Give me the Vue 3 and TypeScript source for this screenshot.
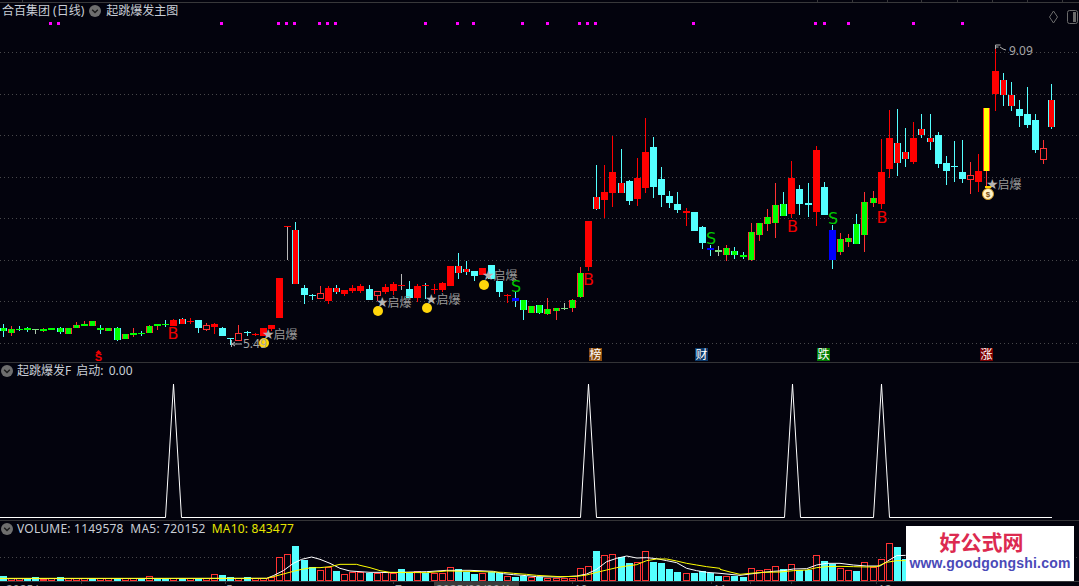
<script setup lang="ts">
type Kind = 'r' | 'x' | 'h' | 'c' | 'g' | 'k' | 'b' | 'y' | 'd' | 't' | 'p'
type Row = [Kind, number, number, number, number]

const rows: Row[] = [
  ['k',328,331,324,337],['g',329,333,326,336],['k',329,330,326,331],['k',328,330,327,332],['d',329,330,329,334],
  ['g',329,331,328,332],['g',328,330,328,330],['k',328,332,327,334],['g',328,334,328,334],['g',325,328,322,328],
  ['g',324,326,321,326],['g',321,326,321,326],['k',328,330,325,334],['g',328,331,328,331],['k',328,340,327,341],
  ['g',334,339,334,339],['g',333,335,328,337],['k',333,334,331,336],['g',326,333,325,333],['g',324,326,324,330],
  ['k',324,325,320,327],['r',320,326,319,326],['x',319,324,318,324],['r',321,322,318,324],['c',320,328,320,333],
  ['h',325,330,323,331],['r',324,327,323,334],['c',328,336,327,336],['c',338,339,338,345],['h',333,341,325,341],
  ['c',332,333,331,336],['r',334,335,333,336],['r',328,336,328,336],['r',325,329,325,331],['r',278,318,278,318],
  ['p',226,227,226,260],['x',230,284,222,284],['c',288,295,285,304],['c',295,296,294,300],['h',293,299,286,299],
  ['r',288,301,286,304],['x',288,292,285,294],['r',290,294,290,296],['r',288,291,285,293],['r',286,291,284,293],
  ['c',289,300,285,300],['h',291,296,291,301],['r',287,292,284,294],['r',284,291,282,295],['p',285,286,274,290],
  ['c',289,298,281,298],['r',286,298,284,302],['t',285,286,283,299],['r',289,290,284,294],['r',283,290,282,292],
  ['r',266,286,266,286],['x',266,273,253,279],['x',269,272,261,275],['c',271,276,271,281],['r',268,275,268,275],
  ['c',265,279,265,279],['c',281,292,281,297],['r',295,296,294,303],['b',298,301,292,307],['k',300,310,300,320],
  ['g',306,313,306,313],['k',305,313,305,314],['g',309,314,298,315],['g',308,311,308,320],['d',308,309,303,310],
  ['g',300,308,299,312],['g',273,297,267,298],['r',221,267,221,271],['x',197,209,165,210],['r',192,200,165,218],
  ['r',172,193,136,207],['x',183,193,149,193],['c',181,201,180,205],['r',178,199,158,206],['r',152,188,118,193],
  ['c',147,187,137,198],['c',179,195,167,207],['c',196,203,191,208],['c',204,210,192,213],['r',211,213,208,226],
  ['c',212,231,212,231],['c',227,243,226,249],['b',248,250,245,256],['d',250,252,246,256],['g',248,255,245,261],
  ['k',251,255,247,259],['k',255,257,252,259],['g',232,260,223,261],['g',223,235,223,241],['g',217,224,209,231],
  ['g',205,223,183,238],['k',204,216,192,216],['r',178,214,161,218],['c',189,204,185,215],['c',203,205,183,217],
  ['r',150,212,146,226],['c',187,215,182,215],['b',230,260,225,269],['g',239,252,233,255],['g',238,242,234,247],
  ['k',224,244,214,244],['g',202,235,192,252],['g',198,203,191,207],['r',172,204,139,209],['r',138,169,110,178],
  ['x',143,163,109,176],['x',152,159,128,167],['r',138,162,122,164],['x',129,135,114,138],['x',138,142,114,150],
  ['c',135,164,132,168],['c',163,171,156,185],['c',166,167,141,182],['c',172,179,140,183],['h',175,180,162,194],
  ['r',171,182,154,192],['y',108,171,108,187],['r',71,94,48,111],['x',80,95,73,106],['x',95,106,82,111],
  ['c',109,116,100,127],['c',114,125,87,128],['c',120,150,114,153],['h',148,160,140,164],['x',100,127,84,129],
]

const bodyColor: Record<Kind, string> = { r:'#ff0000', x:'#ff0000', h:'#03030d', c:'#54ffff', g:'#00ff00', k:'#00ff00', b:'#0000ff', y:'#ffff00', d:'#7ce07c', t:'#ff0000', p:'#ff0000' }
const sideColor: Record<Kind, string> = { r:'#ff0000', x:'#54ffff', h:'#ff3232', c:'#54ffff', g:'#ff3232', k:'#54ffff', b:'#0000ff', y:'#ff2a2a', d:'#7ce07c', t:'#ff0000', p:'#ff0000' }
const wickColor: Record<Kind, string> = { r:'#ff0000', x:'#54ffff', h:'#ff3232', c:'#54ffff', g:'#ff3232', k:'#54ffff', b:'#54ffff', y:'#ff3232', d:'#b0c8b0', t:'#54ffff', p:'#b8b8b8' }

const col = (i: number) => Math.floor(3.2 + i * 8.13)

const candles = rows.map((r, i) => {
  const [kind, top, bottom, high, low] = r
  return {
    i, x: col(i), top, h: Math.max(bottom - top, 1), high, low,
    hollow: kind === 'h',
    sides: bottom - top > 2 && sideColor[kind] !== bodyColor[kind] && kind !== 'h',
    body: bodyColor[kind], side: sideColor[kind], wick: wickColor[kind],
  }
})

const grid = [52, 94, 135, 177, 218, 260, 301, 343]
const marks = [50, 58, 221, 278, 286, 294, 319, 327, 335, 425, 457, 473, 522, 547, 579, 587, 595, 693, 815, 824, 848, 913, 962]

const vol = 'c198 r203 r205 c203 c202 r206 r205 c202 r205 r203 r203 c204 r204 r205 c203 r205 r204 c205 r199 c204 c205 r204 c204 r204 c204 r204 r193 c196 c200 r203 c200 r203 r203 r201 r142 r132 c108 c150 c172 r180 r172 c183 r192 r186 r186 c188 r190 r187 r190 c177 c188 r182 c188 r190 r188 r172 c177 c185 c192 r190 c187 c190 r198 c200 c197 r202 c202 r204 r204 r204 r203 r175 r169 c123 r135 r133 c142 c158 r156 r124 c156 c159 c177 c186 r190 c188 c184 c190 c198 r197 c197 c200 r175 r181 r178 r169 c178 r163 c180 c180 r136 c153 c162 r175 r180 c183 r157 r172 r148 r100 c111 c147'
const volumes = vol.split(' ').map((s, i) => {
  const top = Math.round(510 + Number(s.slice(1)) / 3)
  return { i, x: col(i), top, h: 581 - top, up: s[0] === 'r' }
})

const toPts = (list: number[][], off: number) => list.map(([x, y]) => `${off + x / 3},${510 + y / 3}`).join(' ')

const white = [
  toPts([[0,206],[800,205],[820,197],[850,182],[880,160],[905,148],[935,141],[960,148],[990,160],[1020,175],[1050,183]], 0),
  toPts([[0,185],[30,187],[60,187],[90,188],[120,187],[200,185],[260,181],[330,181],[400,184],[430,191],[460,194],[500,197],[530,200],[600,201],[650,198],[680,192],[710,178],[740,155],[770,145],[800,138],[830,144],[860,143],[890,146],[920,152],[950,158],[980,175],[1010,182],[1040,187],[1080,190]], 360),
  toPts([[0,190],[30,193],[60,196],[90,192],[130,187],[160,184],[190,182],[220,177],[260,176],[290,165],[320,160],[360,160],[400,165],[440,168],[480,168],[500,155],[530,137],[557,136]], 720),
].join(' ')

const yellow = [
  toPts([[0,205],[800,205],[820,200],[850,192],[880,184],[905,178],[935,173],[960,173],[990,170],[1020,163],[1070,163]], 0),
  toPts([[0,166],[30,173],[60,182],[90,187],[200,188],[260,183],[330,184],[400,186],[430,187],[460,190],[500,193],[530,196],[600,200],[650,199],[680,195],[710,187],[740,180],[770,173],[800,168],[830,164],[860,152],[890,147],[920,147],[950,153],[980,160],[1010,165],[1040,170],[1080,175]], 360),
  toPts([[0,178],[30,186],[60,193],[90,190],[130,187],[180,186],[220,182],[260,180],[290,173],[320,170],[360,169],[400,170],[440,171],[470,170],[500,157],[530,152],[557,152]], 720),
].join(' ')

const peaks = [173.5, 588.5, 792.5, 881.5]
const spike = ['0,517.5', ...peaks.flatMap(p => [`${p - 8},517.5`, `${p},384`, `${p + 8},517.5`]), '1052,517.5'].join(' ')

const stars = [
  { x: 262, y: 339 }, { x: 376, y: 307 }, { x: 425, y: 304 }, { x: 482, y: 280 }, { x: 986, y: 189 },
]
const coins = [{ x: 264, y: 343 }, { x: 378, y: 311 }, { x: 427, y: 308 }, { x: 484, y: 285 }]
const buys = [{ x: 173, y: 339 }, { x: 588.5, y: 285 }, { x: 792.5, y: 232 }, { x: 882, y: 223 }]
const sells = [{ x: 516, y: 292 }, { x: 711, y: 244 }, { x: 833, y: 224 }]
const badges = [
  { x: 589, t: '榜', c: '#8a4b0c' }, { x: 695, t: '财', c: '#0b3a6b' },
  { x: 817, t: '跌', c: '#037d03' }, { x: 980, t: '涨', c: '#7c0000' },
]
const topTicks = [817, 852, 887, 921, 957, 992, 1027, 1062]
const axisTicks = [81, 225, 393, 572, 711, 750, 791, 876]
const axisLabels = [{ x: 6, t: '2025/' }, { x: 226, t: '5' }, { x: 395, t: '7' }, { x: 574, t: '10' }, { x: 713, t: '11' }, { x: 878, t: '12' }]
</script>

<template>
  <div class="terminal">
    <section class="pane main">
      <svg class="chart" viewBox="0 0 1079 363" width="1079" height="363">
        <line x1="0" y1="2.5" x2="1079" y2="2.5" class="rule" />
        <line x1="22.5" y1="0" x2="22.5" y2="3" class="rule" />
        <line v-for="t in topTicks" :key="t" :x1="t + 0.5" y1="0" :x2="t + 0.5" y2="3" class="rule" />
        <line v-for="g in grid" :key="g" x1="0" :y1="g + 0.5" x2="1079" :y2="g + 0.5" class="dots" />
        <rect v-for="m in marks" :key="m" :x="m - 1" y="22" width="3" height="3" class="mark" />
        <g class="crisp">
          <g v-for="c in candles" :key="c.i">
            <rect :x="c.x" :y="c.high" width="1" :height="c.low - c.high" :fill="c.wick" />
            <rect v-if="c.hollow" :x="c.x - 2.5" :y="c.top + 0.5" width="6" :height="c.h - 1" :fill="c.body" :stroke="c.side" />
            <rect v-else :x="c.x - 3" :y="c.top" width="7" :height="c.h" :fill="c.body" />
            <template v-if="c.sides">
              <rect :x="c.x - 3" :y="c.top" width="1" :height="c.h" :fill="c.side" />
              <rect :x="c.x + 3" :y="c.top" width="1" :height="c.h" :fill="c.side" />
            </template>
          </g>
        </g>
        <circle v-for="c in coins" :key="c.x" :cx="c.x" :cy="c.y" r="5" class="coin" />
        <text v-for="s in stars" :key="s.x" :x="s.x" :y="s.y" class="star">★<tspan class="star-text" dx="-1">启爆</tspan></text>
        <text v-for="b in buys" :key="b.x" :x="b.x" :y="b.y" class="sig buy">B</text>
        <text v-for="s in sells" :key="s.x" :x="s.x" :y="s.y" class="sig sell">S</text>

        <path d="M231.5 340v7M232 344h10M232 344l3-2M232 344l3 2" class="note-line" />
        <text x="243" y="348" class="note">5.49</text>
        <path d="M995.5 45h5M995.5 45v4M995.5 47h3M1000 47l3 2l3 1" class="note-line" />
        <text x="1009" y="55" class="note">9.09</text>

        <g>
          <rect x="985" y="186" width="6" height="2" class="bag-neck" />
          <ellipse cx="988" cy="194" rx="5.5" ry="5.5" class="bag" />
          <text x="988" y="197" class="bag-sign">$</text>
        </g>

        <path d="M98.5 350l3 3h-6z" class="s-up" />
        <text x="98.5" y="361" class="s-text">S</text>

        <g v-for="b in badges" :key="b.x">
          <rect :x="b.x" y="348" width="13" height="13" :fill="b.c" />
          <text :x="b.x + 6.5" y="359" class="badge-text">{{ b.t }}</text>
        </g>

        <path d="M1053.5 11l4 6l-4 6l-4-6z" class="tool" />
        <rect x="1067.5" y="10.5" width="10" height="13" rx="2" class="tool" />
        <rect x="1073" y="12" width="3" height="10" class="tool-fill" />
      </svg>
      <header class="legend">
        <span class="name">合百集团 (日线)</span>
        <i class="chev"><svg viewBox="0 0 12 12" width="12" height="12"><path d="M3.2 4.8L6 7.6l2.8-2.8" /></svg></i>
        <span class="name">起跳爆发主图</span>
      </header>
    </section>

    <section class="pane sub">
      <svg class="chart" viewBox="0 363 1079 158" width="1079" height="158">
        <polyline :points="spike" class="spike" />
      </svg>
      <header class="legend">
        <i class="chev"><svg viewBox="0 0 12 12" width="12" height="12"><path d="M3.2 4.8L6 7.6l2.8-2.8" /></svg></i>
        <span class="name spaced">起跳爆发F 启动: 0.00</span>
      </header>
    </section>

    <section class="pane volume">
      <svg class="chart" viewBox="0 521 1079 65" width="1079" height="65">
        <line x1="0" y1="557.5" x2="1079" y2="557.5" class="dots" />
        <g class="crisp">
          <template v-for="v in volumes" :key="v.i">
            <rect v-if="v.up" :x="v.x - 2.5" :y="v.top + 0.5" width="6" :height="v.h - 1" class="v-up" />
            <rect v-else :x="v.x - 3" :y="v.top" width="7" :height="v.h" class="v-down" />
          </template>
        </g>
        <polyline :points="white" class="ma5" />
        <polyline :points="yellow" class="ma10" />
        <line x1="0" y1="581.5" x2="1079" y2="581.5" class="rule" />
        <line v-for="t in axisTicks" :key="t" :x1="t + 0.5" y1="581" :x2="t + 0.5" y2="584" class="rule" />
        <text v-for="l in axisLabels" :key="l.x" :x="l.x" y="594" class="axis">{{ l.t }}</text>
        <rect x="434" y="582" width="85" height="4" class="date-box" />
        <text x="436" y="594" class="axis">2025/09/09/1</text>
      </svg>
      <header class="legend">
        <i class="chev"><svg viewBox="0 0 12 12" width="12" height="12"><path d="M3.2 4.8L6 7.6l2.8-2.8" /></svg></i>
        <span class="name wide">VOLUME: 1149578 &nbsp;MA5: 720152</span>
        <span class="name wide ten">MA10: 843477</span>
      </header>
      <aside class="stamp">
        <strong class="stamp-cn">好公式网</strong>
        <span class="stamp-en">www.goodgongshi.com</span>
      </aside>
    </section>
  </div>
</template>

<style>
html, body { margin: 0; background: #03030d; }
</style>

<style scoped>
.terminal {
  width: 1079px;
  height: 586px;
  overflow: hidden;
  display: flex;
  flex-direction: column;
  background: #03030d;
  font-family: "Noto Sans", "Noto Sans CJK SC", sans-serif;
}
.pane { position: relative; flex: none; }
.main { height: 363px; }
.sub { height: 158px; }
.volume { height: 65px; }
.chart { display: block; overflow: hidden; }
.main::after, .sub::after {
  content: "";
  position: absolute;
  left: 0;
  right: 0;
  bottom: 0;
  height: 1px;
  background: #333336;
}
.legend {
  position: absolute;
  left: 2px;
  top: 0;
  height: 14px;
  display: flex;
  align-items: center;
  gap: 5px;
  white-space: nowrap;
  font-size: 12px;
  line-height: 14px;
  color: #c9ced6;
}
.main .legend { top: 4px; }
.sub .legend { top: 1px; left: 1px; gap: 4px; }
.volume .legend { top: 1px; left: 1px; gap: 4px; }
.spaced { word-spacing: 2px; }
.wide { letter-spacing: 0.22px; }
.ten { color: #e6e600; margin-left: 2px; }
.chev {
  width: 12px;
  height: 12px;
  border-radius: 50%;
  background: #6e6e6e;
  display: block;
  flex: none;
}
.chev svg { display: block; }
.chev path { fill: none; stroke: #1a1a1a; stroke-width: 1.4; }

.rule { stroke: #38383a; stroke-width: 1; }
.dots { stroke: #47474a; stroke-width: 1; stroke-dasharray: 1 3; }
.mark { fill: #ff00ff; }
.crisp { shape-rendering: crispEdges; }
.coin { fill: #ffd60a; }
.star { font-family: "DejaVu Sans", sans-serif; font-size: 14px; fill: #b4b4b4; }
.star-text { font-family: "Noto Sans CJK SC", sans-serif; font-size: 12px; fill: #9a9a9a; }
.sig { font-family: "DejaVu Sans", sans-serif; font-size: 16px; text-anchor: middle; }
.buy { fill: #f00000; }
.sell { fill: #00c800; }
.note { font-family: "Noto Sans", sans-serif; font-size: 12px; fill: #a6a6a6; }
.note-line { fill: none; stroke: #b0b0b0; stroke-width: 1; }
.bag { fill: #fff2c8; stroke: #d69c22; stroke-width: 1; }
.bag-neck { fill: #ffd000; }
.bag-sign { font-family: "Liberation Sans", sans-serif; font-size: 8px; font-weight: 700; text-anchor: middle; fill: #7a4a10; }
.s-up { fill: #f00000; }
.s-text { font-family: "Liberation Sans", sans-serif; font-size: 11px; font-weight: 700; text-anchor: middle; fill: #f00000; }
.badge-text { font-family: "Noto Sans CJK SC", sans-serif; font-size: 12px; text-anchor: middle; fill: #ffffff; }
.tool { fill: none; stroke: #6c6c6c; stroke-width: 1; }
.tool-fill { fill: #6c6c6c; }
.spike { fill: none; stroke: #ffffff; stroke-width: 1; }
.v-up { fill: #03030d; stroke: #ff3232; stroke-width: 1; }
.v-down { fill: #54ffff; }
.ma5 { fill: none; stroke: #ffffff; stroke-width: 1; }
.ma10 { fill: none; stroke: #ffff00; stroke-width: 1; }
.axis { font-size: 12px; fill: #9a9a9a; }
.date-box { fill: #3a3a3a; }

.stamp {
  position: absolute;
  left: 906px;
  top: 5px;
  width: 168px;
  height: 55px;
  background: #ffffff;
  display: flex;
  flex-direction: column;
  align-items: center;
}
.stamp-cn {
  margin-top: 2px;
  margin-right: 17px;
  font-family: "Noto Sans CJK SC", sans-serif;
  font-size: 21px;
  line-height: 26px;
  font-weight: 700;
  color: #dc2a50;
}
.stamp-en {
  margin-top: 1px;
  font-family: "Liberation Sans", sans-serif;
  font-size: 14px;
  line-height: 17px;
  font-weight: 700;
  letter-spacing: 0.2px;
  color: #4a4ab8;
}
</style>
